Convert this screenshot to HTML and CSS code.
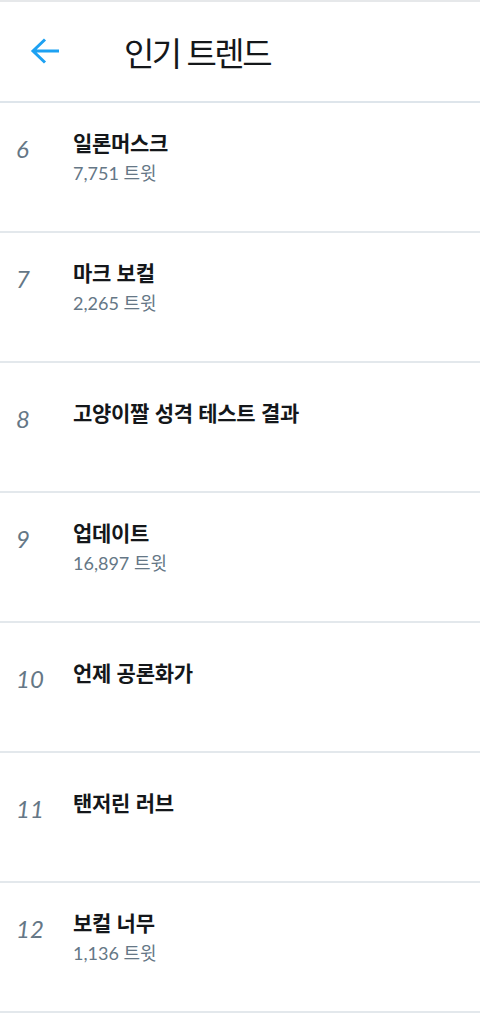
FILE: index.html
```html
<!DOCTYPE html>
<html lang="ko">
<head>
<meta charset="utf-8">
<title>인기 트렌드</title>
<link rel="stylesheet" href="styles.css">
</head>
<body>
<div class="topband"></div>
<header class="header">
  <svg class="back" viewBox="0 0 30 28" width="30" height="28" aria-hidden="true">
    <path d="M3 14H29M15 2.5L3 14L15 25.5" fill="none" stroke="#1da1f2" stroke-width="3"/>
  </svg>
  <h1 class="title">인기 트렌드</h1>
</header>
<main class="list">
  <div class="trend"><div class="inner"><span class="rank">6</span><div class="info"><div class="name">일론머스크</div><div class="count">7,751 트윗</div></div></div></div>
  <div class="trend"><div class="inner"><span class="rank">7</span><div class="info"><div class="name">마크 보컬</div><div class="count">2,265 트윗</div></div></div></div>
  <div class="trend"><div class="inner"><span class="rank">8</span><div class="info"><div class="name">고양이짤 성격 테스트 결과</div></div></div></div>
  <div class="trend"><div class="inner"><span class="rank">9</span><div class="info"><div class="name">업데이트</div><div class="count">16,897 트윗</div></div></div></div>
  <div class="trend"><div class="inner"><span class="rank">10</span><div class="info"><div class="name">언제 공론화가</div></div></div></div>
  <div class="trend"><div class="inner"><span class="rank">11</span><div class="info"><div class="name">탠저린 러브</div></div></div></div>
  <div class="trend"><div class="inner"><span class="rank">12</span><div class="info"><div class="name">보컬 너무</div><div class="count">1,136 트윗</div></div></div></div>
</main>
</body>
</html>
```
FILE: styles.css
```css
* { box-sizing: border-box; }
html, body { margin: 0; padding: 0; background: #ffffff; }
body { font-family: "Noto Sans CJK KR", sans-serif; color: #14171a; }

.topband { height: 2px; background: #e6e8ea; }

.header {
  height: 101px;
  display: flex;
  align-items: center;
  padding-left: 30px;
  border-bottom: 2px solid #dee5eb;
}
.back { display: block; flex: none; margin-top: -1px; }
.title {
  margin: 0 0 0 64px;
  font-size: 33px;
  font-weight: 400;
  letter-spacing: -2.5px;
  line-height: 40px;
  color: #14171a;
}

.trend {
  height: 130px;
  padding-bottom: 23px;
  display: flex;
  align-items: center;
  border-bottom: 2px solid #e3e8ec;
}
.inner { display: flex; align-items: flex-start; }
.rank {
  flex: none;
  width: 73px;
  padding-left: 16px;
  padding-top: 7px;
  font-family: "Lato", "Noto Sans CJK KR", sans-serif;
  font-style: italic;
  font-size: 24px;
  line-height: 28px;
  color: #657786;
}
.name {
  font-size: 21px;
  font-weight: 700;
  letter-spacing: -0.3px;
  line-height: 28px;
  color: #14171a;
}
.count {
  margin-top: 6px;
  font-family: "Lato", "Noto Sans CJK KR", sans-serif;
  font-size: 18px;
  line-height: 22px;
  color: #657786;
}
```
